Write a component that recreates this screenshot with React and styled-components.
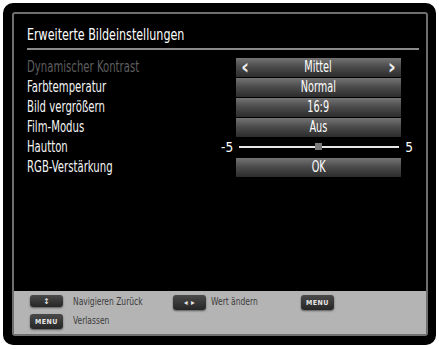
import React from "react";
import styled, { createGlobalStyle } from "styled-components";

const GlobalStyle = createGlobalStyle`
  html, body {
    margin: 0;
    padding: 0;
    background: #ffffff;
  }
  body {
    font-family: "Liberation Sans Narrow", "DejaVu Sans Condensed", "Liberation Sans", sans-serif;
  }
`;

const rows = [
  { label: "Dynamischer Kontrast", value: "Mittel", disabled: true, arrows: true },
  { label: "Farbtemperatur", value: "Normal" },
  { label: "Bild vergrößern", value: "16:9" },
  { label: "Film-Modus", value: "Aus" },
  { label: "Hautton", slider: { min: -5, max: 5, pos: 0.49 } },
  { label: "RGB-Verstärkung", value: "OK" },
];

export default function App() {
  return (
    <>
      <GlobalStyle />
      <Frame>
        <Panel>
          <Content>
            <Title><Narrow scale={0.75}>Erweiterte Bildeinstellungen</Narrow></Title>
            <Rule />
            <List>
              {rows.map((r) => (
                <Row key={r.label}>
                  <Label disabled={r.disabled}><Narrow scale={0.75}>{r.label}</Narrow></Label>
                  {r.slider ? (
                    <SliderCell>
                      <SliderNum>{r.slider.min}</SliderNum>
                      <Track>
                        <Thumb style={{ left: `${r.slider.pos * 100}%` }} />
                      </Track>
                      <SliderNum>{r.slider.max}</SliderNum>
                    </SliderCell>
                  ) : (
                    <ValueBox>
                      {r.arrows && <Arrow>&lsaquo;</Arrow>}
                      <ValueText><Narrow scale={0.72} origin="center">{r.value}</Narrow></ValueText>
                      {r.arrows && <Arrow>&rsaquo;</Arrow>}
                    </ValueBox>
                  )}
                </Row>
              ))}
            </List>
          </Content>
          <Footer>
            <FooterRow>
              <Key>&#x2195;</Key>
              <KeyText width={110}><Narrow scale={0.8}>Navigieren Zurück</Narrow></KeyText>
              <Key tall>&#x25C2; &#x25B8;</Key>
              <KeyText width={95} gap={5}><Narrow scale={0.8}>Wert ändern</Narrow></KeyText>
              <Key tall small>MENU</Key>
            </FooterRow>
            <FooterRow>
              <Key tall small>MENU</Key>
              <KeyText width={100}><Narrow scale={0.8}>Verlassen</Narrow></KeyText>
            </FooterRow>
          </Footer>
        </Panel>
      </Frame>
    </>
  );
}

const Narrow = styled.span`
  display: inline-block;
  white-space: nowrap;
  transform: scaleX(${(p) => p.scale});
  transform-origin: ${(p) => p.origin || "left"} center;
`;

const Frame = styled.div`
  margin: 3px 0 0 3px;
  width: 433px;
  height: 342px;
  box-sizing: border-box;
  background: #000;
  border-radius: 10px;
  padding: 9px 8px 9px 9px;
  display: flex;
`;

const Panel = styled.div`
  flex: 1;
  display: flex;
  flex-direction: column;
  border: 2.5px solid #6f6f6f;
  border-radius: 3px;
  background: #000;
`;

const Content = styled.div`
  flex: 1;
  padding: 12px 7px 0 13px;
`;

const Title = styled.div`
  color: #fff;
  font-size: 16.5px;
  line-height: 18px;
  height: 18px;
`;

const Rule = styled.div`
  margin-top: 4px;
  height: 2px;
  background: #8a8a8a;
`;

const List = styled.div`
  margin-top: 7px;
  display: flex;
  flex-direction: column;
`;

const Row = styled.div`
  display: grid;
  grid-template-columns: 209px 165px;
  height: 20px;
  align-items: center;
`;

const Label = styled.div`
  color: ${(p) => (p.disabled ? "#5e5e5e" : "#f4f4f4")};
  font-size: 15px;
`;

const ValueBox = styled.div`
  height: 19px;
  display: flex;
  align-items: center;
  justify-content: space-between;
  padding: 0 5px;
  box-sizing: border-box;
  background: linear-gradient(to bottom, #747474 0%, #4c4c4c 45%, #2c2c2c 100%);
  color: #fff;
  font-size: 15px;
`;

const ValueText = styled.span`
  flex: 1;
  text-align: center;
`;

const Arrow = styled.b`
  font-size: 22px;
  line-height: 19px;
  color: #ececec;
  margin-top: -2px;
`;

const SliderCell = styled.div`
  display: flex;
  align-items: center;
  margin: 0 -12px 0 -15px;
  gap: 6px;
  color: #fff;
`;

const SliderNum = styled.span`
  font-size: 13.5px;
`;

const Track = styled.div`
  position: relative;
  flex: 1;
  height: 2px;
  background: #e6e6e6;
`;

const Thumb = styled.div`
  position: absolute;
  top: -3px;
  width: 7px;
  height: 7px;
  margin-left: -3px;
  background: #7a7a7a;
`;

const Footer = styled.div`
  height: 43px;
  background: #b4b4b4;
  padding: 4px 0 0 16px;
  box-sizing: border-box;
  display: flex;
  flex-direction: column;
  gap: 4px;
`;

const FooterRow = styled.div`
  display: flex;
  align-items: flex-start;
`;

const Key = styled.div`
  width: 33px;
  height: ${(p) => (p.tall ? "15px" : "12px")};
  border-radius: 3px;
  background: linear-gradient(to bottom, #4a4a4a, #262626);
  box-shadow: 0 1px 2px rgba(0, 0, 0, 0.5);
  color: #e8e8e8;
  font-size: ${(p) => (p.small ? "7px" : "8px")};
  font-weight: bold;
  letter-spacing: 0.5px;
  display: flex;
  align-items: center;
  justify-content: center;
`;

const KeyText = styled.div`
  width: ${(p) => p.width}px;
  padding-left: ${(p) => p.gap || 10}px;
  box-sizing: border-box;
  color: #3c3c3c;
  font-size: 10.5px;
  line-height: 13px;
`;
